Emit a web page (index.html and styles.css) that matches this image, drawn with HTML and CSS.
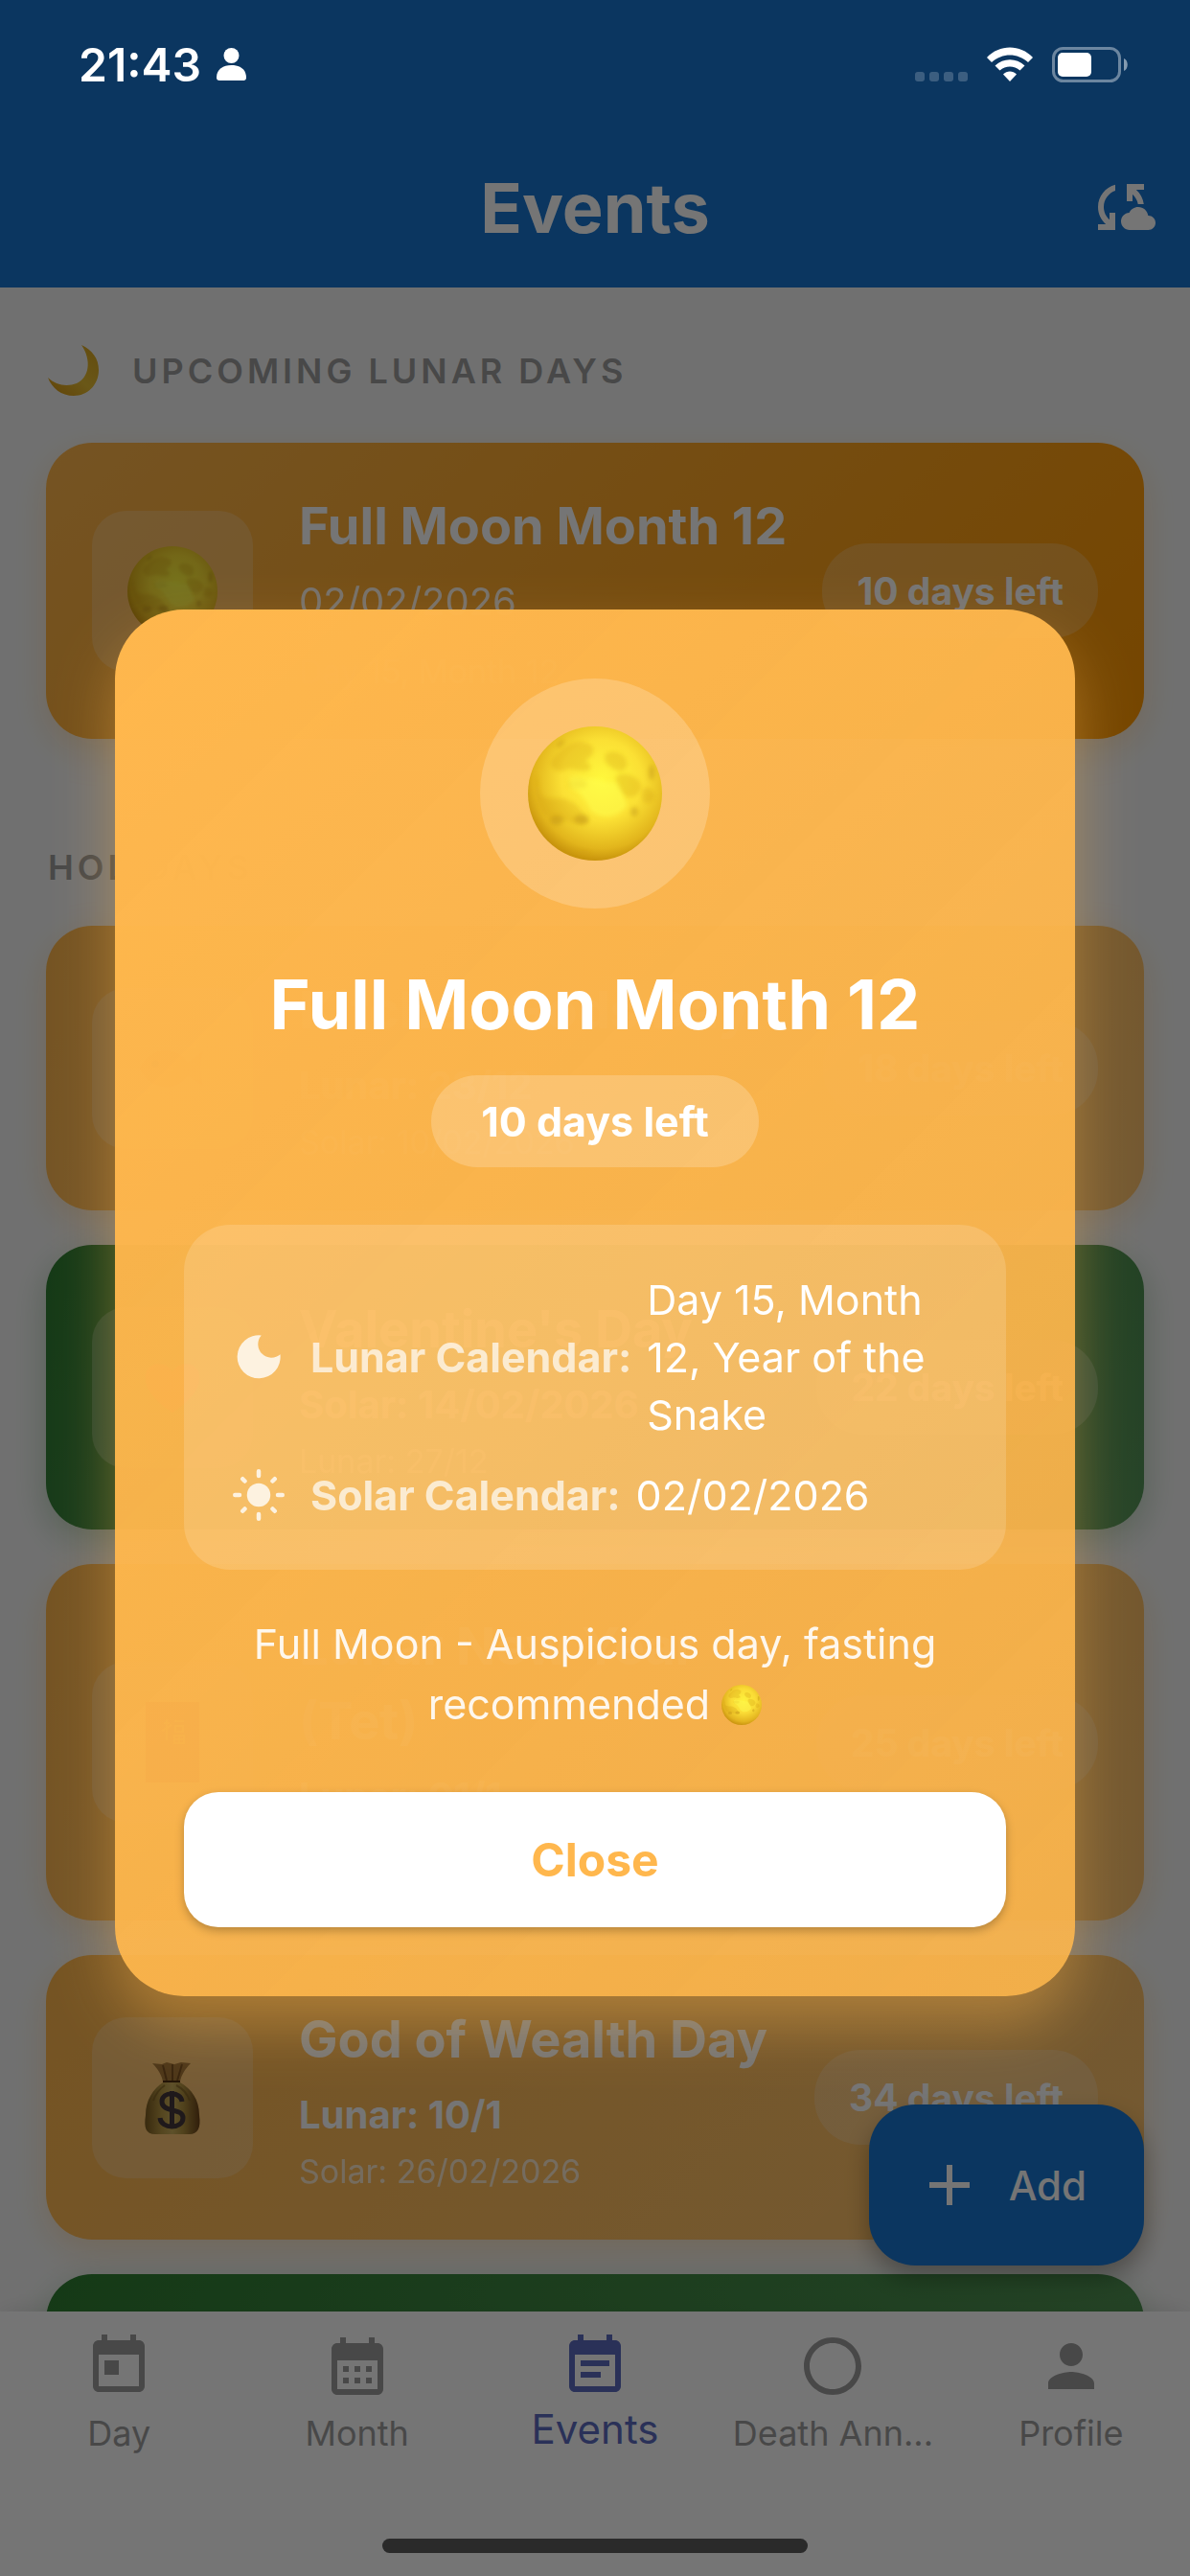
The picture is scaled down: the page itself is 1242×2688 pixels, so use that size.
FILE: index.html
```html
<!DOCTYPE html>
<html lang="en">
<head>
    <meta charset="UTF-8">
    <meta name="viewport" content="width=device-width, initial-scale=1.0">
    <title>Events</title>
    <link rel="stylesheet" href="styles.css">
</head>
<body>

    <!-- Shared emoji drawings -->
    <svg class="defs" width="0" height="0" aria-hidden="true">
        <defs>
            <radialGradient id="moonFill" cx="55%" cy="40%" r="60%">
                <stop offset="0" stop-color="#fff83c"/>
                <stop offset="0.5" stop-color="#fbe034"/>
                <stop offset="0.85" stop-color="#e2b51c"/>
                <stop offset="1" stop-color="#c8940c"/>
            </radialGradient>
            <filter id="soften" x="-10%" y="-10%" width="120%" height="120%"><feGaussianBlur stdDeviation="2"/></filter>
            <linearGradient id="crescentFill" x1="1" y1="0" x2="0.2" y2="1">
                <stop offset="0" stop-color="#d8a420"/>
                <stop offset="0.6" stop-color="#e6be34"/>
                <stop offset="1" stop-color="#d89a18"/>
            </linearGradient>
            <linearGradient id="bagFill" x1="0" y1="0" x2="1" y2="0">
                <stop offset="0" stop-color="#7a5a20"/>
                <stop offset="0.3" stop-color="#b89844"/>
                <stop offset="0.5" stop-color="#ccb05c"/>
                <stop offset="0.7" stop-color="#b0903e"/>
                <stop offset="1" stop-color="#6a4218"/>
            </linearGradient>
            <symbol id="moon" viewBox="0 0 140 140">
                <circle cx="70" cy="70" r="70" fill="url(#moonFill)"/>
                <g fill="#d09c10" opacity="0.28" filter="url(#soften)">
                    <path d="M36 24c10-10 26-10 32-2 2 8-4 10-8 14 6 4 8 8 2 10-10 2-16-4-24 0-8 2-14-2-14-8 2-6 8-10 12-14z"/>
                    <path d="M82 28c8-4 16 0 20 6 4 8-2 14-8 12-8-2-18-10-12-18z"/>
                    <path d="M94 50c8-2 20 2 24 10 2 6-4 14-12 14-10-2-18-16-12-24z"/>
                    <path d="M8 50c4 4 2 14 6 22 8 6 22 0 30 6 10 4 12 12 18 18 2 6-4 8-10 6-10-2-18-6-28-6-12-4-18-22-16-46z"/>
                    <path d="M122 64c6 0 10 4 10 10-2 6-8 8-12 4-2-4-2-10 2-14z"/>
                    <ellipse cx="52" cy="60" rx="10" ry="5"/>
                    <ellipse cx="58" cy="132" rx="8" ry="2"/>
                </g>
                <g fill="#a87808" opacity="0.3" filter="url(#soften)">
                    <ellipse cx="129" cy="48" rx="3" ry="8"/>
                    <ellipse cx="30" cy="98" rx="7" ry="5"/>
                    <ellipse cx="56" cy="97" rx="8" ry="5"/>
                    <ellipse cx="111" cy="89" rx="4" ry="5"/>
                    <ellipse cx="34" cy="18" rx="5" ry="2" transform="rotate(-45 34 18)"/>
                </g>
                <path d="M44 54c8-4 14 2 22 0 8 0 12 6 26 4 8 8 6 16 12 24-10 14-28 16-38 6-4-8-8-14-14-20-6-2-12-6-8-14z" fill="#ffff50" opacity="0.5" filter="url(#soften)"/>
            </symbol>
            <symbol id="crescent" viewBox="0 0 54 54">
                <path d="M35 0C46 5 53 14 53 26 53 42 41 53 27 53 14 53 4 45 0 34 8 42 20 44 30 40 43 34 46 16 35 0z" fill="url(#crescentFill)"/>
            </symbol>
            <symbol id="moneyBag" viewBox="0 0 60 78">
                <path d="M20 23h18c12 7 20 18 20 34 2 14-2 20-10 20H12C2 77 0 70 2 57 2 41 10 30 20 23z" fill="url(#bagFill)"/>
                <path d="M9 3l10 1 5-2 8 2 7-2 10 1c-6 6-10 13-11 19H20C19 16 15 9 9 3z" fill="#a87838"/>
                <path d="M20 5l4 16M30 4v17M40 4l-5 17" fill="none" stroke="#7a5020" stroke-width="2"/>
                <path d="M20 22h18" stroke="#4a2c10" stroke-width="2"/>
                <path d="M22 26c-6 4-10 10-12 16M34 26c8 4 12 10 14 16" fill="none" stroke="#7a5a20" stroke-width="2" opacity="0.6"/>
                <path d="M40 43c-1-11-21-11-21 0 0 12 22 6 22 17 0 12-23 12-24 0M29.500 32v39" fill="none" stroke="#45383c" stroke-width="5"/>
            </symbol>
            <symbol id="heart" viewBox="0 0 60 60">
                <path d="M30 56C10 42 2 32 2 19 2 4 22 0 30 14 38 0 58 4 58 19c0 13-8 23-28 37z" fill="#e8453c"/>
            </symbol>
            <symbol id="envelope" viewBox="0 0 60 84">
                <path d="M2 0h56v84H2z" fill="#d8402c"/>
                <path d="M21 22h6M24 18v22M19 30l10-6M32 20h10M33 25h8v6h-8zM32 35h10v8H32zM37 35v8M32 39h10" fill="none" stroke="#f0b440" stroke-width="2"/>
            </symbol>
            <symbol id="carp" viewBox="0 0 72 60">
                <path d="M2 30C12 8 38 4 52 24l16-12c-4 12-4 24 0 36L52 38C38 56 12 52 2 30z" fill="#e8883c"/>
                <circle cx="18" cy="25" r="4" fill="#503010"/>
            </symbol>
        </defs>
    </svg>

    <div class="status-bar">
        <div class="status-group">
            <span class="status-time">21:43</span>
            <svg class="status-person" viewBox="0 0 31 34"><circle cx="15.500" cy="8" r="8"/><path d="M0 31c0-9 7-13 15.500-13S31 22 31 31c0 2-1 3-3 3H3c-2 0-3-1-3-3z"/></svg>
        </div>
        <div class="status-group status-right">
            <svg class="status-dots" viewBox="0 0 55 37"><rect y="26" width="10" height="10" rx="3"/><rect x="15" y="26" width="10" height="10" rx="3"/><rect x="30" y="26" width="10" height="10" rx="3"/><rect x="45" y="26" width="10" height="10" rx="3"/></svg>
            <svg class="status-wifi" viewBox="0 0 48 37"><path d="M0 11C13-3 35-3 48 11l-5 5C32 6 16 6 5 16z"/><path d="M8.500 19.500c9-8.500 22-8.500 31 0l-5 5c-6-5.500-15-5.500-21 0z"/><path d="M17 28.500c4-4 10-4 14 0l-7 7.500z"/></svg>
            <svg class="status-battery" viewBox="0 0 80 37"><rect x="1.500" y="1.500" width="69" height="34" rx="10" fill="none" stroke="#fff" stroke-width="3" opacity="0.400"/><rect x="6" y="6" width="35" height="25" rx="5"/><path d="M75 12c5 2 5 11 0 13z" opacity="0.500"/></svg>
        </div>
    </div>

    <div class="app">
        <header class="app-bar">
            <h1>Events</h1>
            <button class="sync-button" type="button" aria-label="Sync">
                <svg viewBox="0 0 24 24"><path d="M21.500 14.980c-.020 0-.030 0-.050.010C21.200 13.300 19.760 12 18 12c-1.400 0-2.600.830-3.160 2.020C13.260 14.100 12 15.400 12 17c0 1.660 1.340 3 3 3l6.500-.020c1.380 0 2.500-1.120 2.500-2.500s-1.120-2.500-2.500-2.500zM10 4.260v2.090C7.670 7.180 6 9.390 6 12c0 1.770.780 3.340 2 4.440V14h2v6H4v-2h2.730C5.060 16.540 4 14.400 4 12c0-3.730 2.550-6.850 6-7.740zM20 6h-2.730c1.430 1.260 2.410 3.010 2.660 5h-2.020c-.230-1.360-.930-2.550-1.910-3.440V10h-2V4h6v2z"/></svg>
            </button>
        </header>

        <main class="content">
            <div class="list">
                <h2 class="section-title with-icon"><svg class="section-icon"><use href="#crescent"/></svg>UPCOMING LUNAR DAYS</h2>
                <article class="card lunar">
                    <div class="card-icon"><svg class="icon-moon"><use href="#moon"/></svg></div>
                    <div class="card-text">
                        <h3>Full Moon Month 12</h3>
                        <p class="card-date">02/02/2026</p>
                        <p class="card-sub">Day 15, Month 12</p>
                    </div>
                    <span class="days-pill">10 days left</span>
                </article>

                <h2 class="section-title">HOLIDAYS</h2>
                <div class="card-list">
                    <article class="card orange">
                        <div class="card-icon"><svg class="icon-carp"><use href="#carp"/></svg></div>
                        <div class="card-text">
                            <h3>Kitchen Gods Day</h3>
                            <p class="card-main">Lunar: 23/12</p>
                            <p class="card-sub">Solar: 10/02/2026</p>
                        </div>
                        <span class="days-pill">18 days left</span>
                    </article>
                    <article class="card green">
                        <div class="card-icon"><svg class="icon-heart"><use href="#heart"/></svg></div>
                        <div class="card-text">
                            <h3>Valentine's Day</h3>
                            <p class="card-main">Solar: 14/02/2026</p>
                            <p class="card-sub">Lunar: 27/12</p>
                        </div>
                        <span class="days-pill">22 days left</span>
                    </article>
                    <article class="card orange">
                        <div class="card-icon"><svg class="icon-envelope"><use href="#envelope"/></svg></div>
                        <div class="card-text">
                            <h3>Lunar New Year<br>(Tet)</h3>
                            <p class="card-main">Lunar: 01/1</p>
                            <p class="card-sub">Solar: 17/02/2026</p>
                        </div>
                        <span class="days-pill">25 days left</span>
                    </article>
                    <article class="card orange">
                        <div class="card-icon"><svg class="icon-bag"><use href="#moneyBag"/></svg></div>
                        <div class="card-text">
                            <h3>God of Wealth Day</h3>
                            <p class="card-main">Lunar: 10/1</p>
                            <p class="card-sub">Solar: 26/02/2026</p>
                        </div>
                        <span class="days-pill">34 days left</span>
                    </article>
                    <article class="card green"></article>
                </div>
            </div>

            <button class="fab" type="button">
                <svg viewBox="0 0 24 24"><path d="M19 13h-6v6h-2v-6H5v-2h6V5h2v6h6v2z"/></svg>
                Add
            </button>
        </main>

        <nav class="bottom-nav">
            <a href="#day">
                <svg viewBox="0 0 24 24"><path d="M19 3h-1V1h-2v2H8V1H6v2H5c-1.110 0-1.990.9-1.990 2L3 19c0 1.100.890 2 2 2h14c1.100 0 2-.9 2-2V5c0-1.100-.9-2-2-2zm0 16H5V8h14v11zM7 10h5v5H7z"/></svg>
                <span>Day</span>
            </a>
            <a href="#month">
                <svg viewBox="0 0 24 24"><path d="M19 4h-1V2h-2v2H8V2H6v2H5c-1.110 0-1.990.9-1.990 2L3 20c0 1.100.890 2 2 2h14c1.100 0 2-.9 2-2V6c0-1.100-.9-2-2-2zm0 16H5V10h14v10zM9 14H7v-2h2v2zm4 0h-2v-2h2v2zm4 0h-2v-2h2v2zm-8 4H7v-2h2v2zm4 0h-2v-2h2v2zm4 0h-2v-2h2v2z"/></svg>
                <span>Month</span>
            </a>
            <a href="#events" class="active">
                <svg viewBox="0 0 24 24"><path d="M17 10H7v2h10v-2zm2-7h-1V1h-2v2H8V1H6v2H5c-1.110 0-1.990.9-1.990 2L3 19c0 1.100.890 2 2 2h14c1.100 0 2-.9 2-2V5c0-1.100-.9-2-2-2zm0 16H5V8h14v11zm-5-5H7v2h7v-2z"/></svg>
                <span>Events</span>
            </a>
            <a href="#anniversaries">
                <svg viewBox="0 0 24 24"><path d="M12 2C6.480 2 2 6.480 2 12s4.480 10 10 10 10-4.480 10-10S17.520 2 12 2zm0 18c-4.420 0-8-3.580-8-8s3.580-8 8-8 8 3.580 8 8-3.580 8-8 8z"/></svg>
                <span>Death Ann...</span>
            </a>
            <a href="#profile">
                <svg viewBox="0 0 24 24"><path d="M12 12c2.210 0 4-1.790 4-4s-1.790-4-4-4-4 1.790-4 4 1.790 4 4 4zm0 2c-2.670 0-8 1.340-8 4v2h16v-2c0-2.660-5.330-4-8-4z"/></svg>
                <span>Profile</span>
            </a>
        </nav>
    </div>

    <div class="scrim">
        <section class="dialog" role="dialog" aria-modal="true" aria-labelledby="dialog-title">
            <div class="dialog-icon"><svg><use href="#moon"/></svg></div>
            <h2 id="dialog-title">Full Moon Month 12</h2>
            <span class="dialog-pill">10 days left</span>
            <dl class="info">
                <div class="info-row">
                    <svg viewBox="0 0 24 24"><path d="M13.100 3A9 9 0 1 0 21 10.900 5.600 5.600 0 0 1 13.100 3z"/></svg>
                    <dt>Lunar Calendar:</dt>
                    <dd>Day 15, Month 12, Year of the Snake</dd>
                </div>
                <div class="info-row">
                    <svg viewBox="0 0 24 24"><circle cx="12" cy="12" r="4.900"/><path d="M12 2.100V4M12 20v1.900M2.100 12H4M20 12h1.900M5.300 5.300l.9.9M17.800 17.800l.9.9M5.300 18.700l.9-.9M17.800 6.200l.9-.9" fill="none" stroke="currentColor" stroke-width="1.800" stroke-linecap="round"/></svg>
                    <dt>Solar Calendar:</dt>
                    <dd>02/02/2026</dd>
                </div>
            </dl>
            <p class="message">Full Moon - Auspicious day, fasting recommended <svg><use href="#moon"/></svg></p>
            <button class="close-button" type="button">Close</button>
        </section>
    </div>

    <div class="home-indicator"></div>

</body>
</html>
```
FILE: styles.css
```css
* { box-sizing: border-box; }
body { margin: 0; font-family: Inter, "Liberation Sans", sans-serif; color: #fff; background: #fff; }
h1, h2, h3, p, dl, dd, dt { margin: 0; font-weight: 400; }
button { border: 0; padding: 0; background: none; font-family: inherit; color: inherit; }
svg { display: block; flex: none; fill: currentColor; }
.defs { position: absolute; }

/* System status bar and home indicator sit over everything */
.status-bar { position: fixed; top: 0; left: 0; right: 0; z-index: 3; height: 132px; padding: 2px 64px 0 82px; display: flex; align-items: center; justify-content: space-between; }
.status-group { display: flex; align-items: center; gap: 16px; }
.status-right { gap: 20px; }
.status-time { font-size: 48px; font-weight: 600; }
.status-person { width: 31px; height: 34px; }
.status-dots { width: 55px; height: 37px; opacity: 0.2; }
.status-wifi { width: 48px; height: 37px; }
.status-battery { width: 80px; height: 37px; }
.home-indicator { position: fixed; bottom: 24px; left: 0; right: 0; z-index: 3; width: 444px; height: 15px; margin: 0 auto; border-radius: 8px; background: #2a2a2a; }

/* App shell */
.app { height: 100vh; display: flex; flex-direction: column; overflow: hidden; background: #f5f5f5; }
.app-bar { display: grid; grid-template-columns: 1fr auto 1fr; align-items: center; height: 300px; padding: 132px 36px 0; background: #1976d2; }
.app-bar h1 { grid-column: 2; font-size: 72px; font-weight: 700; }
.sync-button { justify-self: end; }
.sync-button svg { width: 72px; height: 72px; }

.content { position: relative; flex: 1; min-height: 0; overflow: hidden; }
.list { padding: 48px 48px 0; }
.section-title { display: flex; align-items: center; gap: 34px; height: 51px; margin: 108px 2px 36px; color: #9e9e9e; font-size: 36px; font-weight: 600; letter-spacing: 4px; }
.section-title.with-icon { height: 78px; margin-top: 0; }
.section-icon { width: 54px; height: 54px; }

/* Cards */
.card-list { display: flex; flex-direction: column; gap: 36px; }
.card { display: flex; align-items: center; gap: 48px; min-height: 297px; padding: 47px 48px; border-radius: 48px; }
.card.lunar { min-height: 309px; background: linear-gradient(135deg, #ffb74d, #ff9800); box-shadow: 0 12px 36px rgba(255, 183, 77, 0.3); }
.card.orange { background: linear-gradient(135deg, #ffb74d, rgba(255, 183, 77, 0.8)); box-shadow: 0 12px 36px rgba(255, 183, 77, 0.3); }
.card.green { background: linear-gradient(135deg, #2e7d32, rgba(46, 125, 50, 0.8)); box-shadow: 0 12px 36px rgba(46, 125, 50, 0.3); }
.card-icon { flex: none; display: flex; align-items: center; justify-content: center; width: 168px; height: 168px; border-radius: 36px; background: rgba(255, 255, 255, 0.2); }
.card-text { flex: 1; white-space: nowrap; min-width: 0; }
.card-text h3 { font-size: 54px; font-weight: 700; line-height: 78px; margin-bottom: 12px; }
.card-main { font-size: 40px; font-weight: 700; line-height: 56px; margin-bottom: 8px; }
.card-date { font-size: 40px; line-height: 56px; margin-bottom: 22px; opacity: 0.9; }
.card-sub { font-size: 34px; line-height: 46px; opacity: 0.7; }
.days-pill { flex: none; padding: 0 36px; border-radius: 48px; background: rgba(255, 255, 255, 0.2); font-size: 39px; font-weight: 700; line-height: 99px; }
.icon-moon { width: 94px; height: 94px; }
.icon-bag { width: 60px; height: 78px; }
.icon-heart { width: 60px; height: 60px; }
.icon-envelope { width: 60px; height: 84px; }
.icon-carp { width: 72px; height: 60px; }

.fab { position: absolute; right: 48px; bottom: 48px; display: flex; align-items: center; gap: 26px; height: 168px; padding: 0 60px 0 48px; border-radius: 48px; background: #1976d2; font-size: 42px; font-weight: 500; box-shadow: 0 12px 24px rgba(0, 0, 0, 0.3); }
.fab svg { width: 72px; height: 72px; }

.bottom-nav { display: flex; height: 276px; background: #fff; box-shadow: 0 0 24px rgba(0, 0, 0, 0.1); }
.bottom-nav a { flex: 1; min-width: 0; display: flex; flex-direction: column; align-items: center; padding-top: 21px; color: #9e9e9e; font-size: 36px; text-decoration: none; }
.bottom-nav svg { width: 72px; height: 72px; }
.bottom-nav span { line-height: 68px; }
.bottom-nav .active { color: #5c6bc0; font-size: 42px; }
.bottom-nav .active span { line-height: 60px; }

/* Event details dialog */
.scrim { position: fixed; inset: 0; z-index: 2; display: flex; align-items: center; justify-content: center; padding: 132px 120px 102px; background: rgba(0, 0, 0, 0.54); }
.dialog { width: 100%; display: flex; flex-direction: column; align-items: center; padding: 72px; border-radius: 72px; background: linear-gradient(135deg, #ffb74d, rgba(255, 183, 77, 0.9)); box-shadow: 0 30px 60px rgba(255, 183, 77, 0.4); }
.dialog-icon { display: flex; align-items: center; justify-content: center; width: 240px; height: 240px; border-radius: 50%; background: rgba(255, 255, 255, 0.2); }
.dialog-icon svg { width: 140px; height: 140px; }
.dialog h2 { margin: 58px 0 32px; font-size: 72px; font-weight: 700; line-height: 84px; text-align: center; }
.dialog-pill { padding: 0 52px; border-radius: 48px; background: rgba(255, 255, 255, 0.2); font-size: 43px; font-weight: 700; line-height: 96px; }
.info { align-self: stretch; display: flex; flex-direction: column; gap: 24px; margin: 60px 0 46px; padding: 48px; border-radius: 48px; background: rgba(255, 255, 255, 0.15); font-size: 43px; line-height: 60px; }
.info-row { display: flex; align-items: center; }
.info-row svg { width: 60px; height: 60px; margin-right: 24px; opacity: 0.8; }
.info-row dt { flex: none; margin-right: 16px; font-weight: 700; opacity: 0.7; }
.message { font-size: 43px; line-height: 63px; text-align: center; opacity: 0.9; }
.message svg { display: inline-block; width: 42px; height: 42px; vertical-align: -6px; }
.close-button { align-self: stretch; height: 141px; margin-top: 60px; border-radius: 36px; background: #fff; color: #ffb74d; font-size: 48px; font-weight: 700; box-shadow: 0 4px 10px rgba(0, 0, 0, 0.25); }
```
